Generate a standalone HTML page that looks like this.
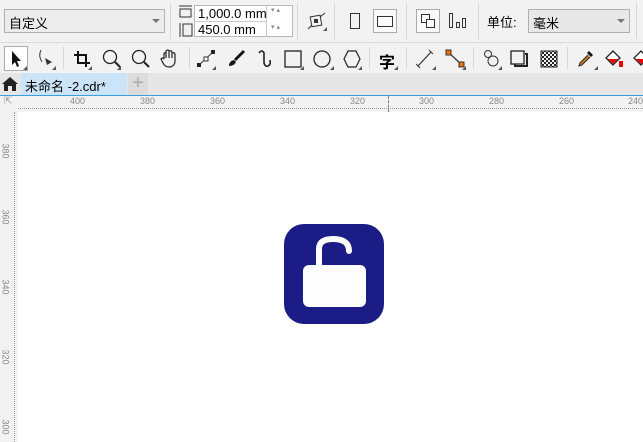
<!DOCTYPE html>
<html><head><meta charset="utf-8"><style>
*{margin:0;padding:0;box-sizing:border-box}
body{width:643px;height:442px;overflow:hidden;background:#f2f2f2;font-family:"Liberation Sans","Noto Sans CJK SC",sans-serif;position:relative;font-size:12px;color:#000}
.a{position:absolute}
.sep{position:absolute;width:1px;background:#d6d6d6}
.ic{position:absolute;width:24px;height:24px}
.tri{position:absolute;width:0;height:0;border-left:4px solid transparent;border-bottom:4px solid #555}
.rl{position:absolute;font-size:9px;color:#888}
</style></head><body>
<!-- row1 -->
<div class="a" style="left:4px;top:9px;width:161px;height:24px;border:1px solid #b0b0b0;background:#ececec;font-size:13px;padding:3px 4px">自定义</div>
<div class="a" style="left:152px;top:19px;border-left:4px solid transparent;border-right:4px solid transparent;border-top:4px solid #777"></div>
<div class="sep" style="left:170px;top:3px;height:36px"></div>
<svg class="a" style="left:178px;top:4px" width="16" height="34"><rect x="2" y="5" width="11" height="8" fill="none" stroke="#333"/><line x1="1" y1="2" x2="14" y2="2" stroke="#333"/><rect x="5" y="20" width="9" height="12" fill="none" stroke="#333"/><line x1="2" y1="19" x2="2" y2="33" stroke="#333"/></svg>
<div class="a" style="left:194px;top:5px;width:99px;height:32px;border:1px solid #b8b8b8;background:#fff"></div>
<div class="a" style="left:194px;top:21px;width:72px;height:1px;background:#ccc"></div>
<div class="a" style="left:266px;top:5px;width:1px;height:32px;background:#ccc"></div>
<div class="a" style="left:198px;top:6px;font-size:13px">1,000.0 mm</div>
<div class="a" style="left:198px;top:22px;font-size:13px">450.0 mm</div>
<div class="a" style="left:271px;top:6px;font-size:7px;color:#888">▾ ▴</div>
<div class="a" style="left:271px;top:23px;font-size:7px;color:#888">▾ ▴</div>
<div class="sep" style="left:297px;top:3px;height:36px"></div>
<svg class="a" style="left:306px;top:11px" width="22" height="22"><rect x="5" y="5" width="10" height="10" fill="none" stroke="#333" transform="rotate(-10 10 10)"/><rect x="8" y="8" width="4" height="4" fill="#333"/><line x1="14" y1="6" x2="19" y2="2" stroke="#333"/><line x1="2" y1="18" x2="6" y2="14" stroke="#333"/></svg>
<div class="tri" style="left:323px;top:27px"></div>
<div class="sep" style="left:334px;top:3px;height:36px"></div>
<div class="a" style="left:350px;top:13px;width:10px;height:16px;border:1px solid #333"></div>
<div class="a" style="left:373px;top:9px;width:24px;height:24px;border:1px solid #aaa;background:#fafafa"></div>
<div class="a" style="left:377px;top:16px;width:16px;height:11px;border:1px solid #333"></div>
<div class="sep" style="left:406px;top:3px;height:36px"></div>
<div class="a" style="left:416px;top:9px;width:24px;height:24px;border:1px solid #aaa;background:#fafafa"></div>
<div class="a" style="left:421px;top:14px;width:9px;height:9px;border:1px solid #333"></div>
<div class="a" style="left:426px;top:19px;width:9px;height:9px;border:1px solid #333;background:#fafafa"></div>
<div class="a" style="left:449px;top:13px;width:4px;height:15px;border:1px solid #333"></div>
<div class="a" style="left:456px;top:22px;width:4px;height:6px;border:1px solid #333"></div>
<div class="a" style="left:462px;top:18px;width:4px;height:10px;border:1px solid #333"></div>
<div class="sep" style="left:478px;top:3px;height:36px"></div>
<div class="a" style="left:487px;top:12px;font-size:13px">单位:</div>
<div class="a" style="left:528px;top:9px;width:102px;height:24px;border:1px solid #b0b0b0;background:#e8e8e8;font-size:13px;padding:3px 4px">毫米</div>
<div class="a" style="left:617px;top:19px;border-left:4px solid transparent;border-right:4px solid transparent;border-top:4px solid #777"></div>
<div class="sep" style="left:636px;top:3px;height:36px"></div>
<div class="a" style="left:0;top:42px;width:643px;height:1px;background:#dadada"></div>
<!-- row2 -->
<div class="a" style="left:4px;top:46px;width:24px;height:25px;border:1px solid #aaa;background:#fff"></div>
<svg class="a" style="left:9px;top:50px" width="14" height="18"><path d="M3 1 L3 15 L6 12 L8 17 L10 16 L8 11 L12 11 Z" fill="#111"/></svg>
<div class="tri" style="left:23px;top:66px"></div>
<svg class="a" style="left:36px;top:48px" width="22" height="22"><path d="M5 2 Q2 8 6 14" fill="none" stroke="#333"/><path d="M9 10 L16 14 L11 17 Z" fill="#333"/></svg>
<div class="tri" style="left:52px;top:66px"></div>
<div class="sep" style="left:63px;top:47px;height:22px"></div>
<svg class="a" style="left:72px;top:49px" width="22" height="22"><path d="M6 2 V14 H18 M2 6 H14 V18" fill="none" stroke="#111" stroke-width="2"/></svg>
<div class="tri" style="left:88px;top:66px"></div>
<svg class="a" style="left:101px;top:48px" width="22" height="22"><circle cx="9" cy="9" r="6.5" fill="none" stroke="#222" stroke-width="1.3"/><line x1="14" y1="14" x2="19" y2="19" stroke="#222" stroke-width="2"/></svg>
<div class="tri" style="left:117px;top:66px"></div>
<svg class="a" style="left:130px;top:48px" width="22" height="22"><circle cx="9" cy="9" r="6.5" fill="none" stroke="#222" stroke-width="1.3"/><line x1="14" y1="14" x2="19" y2="19" stroke="#222" stroke-width="2"/></svg>
<svg class="a" style="left:159px;top:48px" width="22" height="22"><path d="M5 11 V6 Q5 4 7 5 V10 V3 Q9 1 10 3 V10 V3 Q12 2 13 4 V10 V5 Q15 4 16 6 V14 Q15 19 10 19 Q6 19 4 15 L2 11 Q3 9 5 11" fill="none" stroke="#222" stroke-width="1.2"/></svg>
<div class="sep" style="left:189px;top:47px;height:22px"></div>
<svg class="a" style="left:196px;top:48px" width="22" height="22"><line x1="3" y1="17" x2="17" y2="4" stroke="#333"/><rect x="1" y="15" width="4" height="4" fill="#222"/><rect x="8" y="9" width="4" height="4" fill="#fff" stroke="#333"/><rect x="15" y="2" width="4" height="4" fill="#222"/></svg>
<div class="tri" style="left:212px;top:66px"></div>
<svg class="a" style="left:226px;top:48px" width="22" height="22"><path d="M17 2 L19 4 L10 13 L8 11 Z" fill="#111"/><path d="M8 12 Q3 13 3 18 Q8 18 10 14 Z" fill="#111"/></svg>
<svg class="a" style="left:255px;top:48px" width="22" height="22"><path d="M4 5 Q7 1 9 5 L9 15 Q10 19 13 18 Q16 17 15 12" fill="none" stroke="#222" stroke-width="1.6"/></svg>
<svg class="a" style="left:283px;top:48px" width="22" height="22"><rect x="2" y="3" width="16" height="16" fill="none" stroke="#222" stroke-width="1.3"/></svg>
<div class="tri" style="left:300px;top:66px"></div>
<svg class="a" style="left:311px;top:48px" width="22" height="22"><circle cx="11" cy="11" r="8" fill="none" stroke="#222" stroke-width="1.3"/></svg>
<div class="tri" style="left:330px;top:66px"></div>
<svg class="a" style="left:341px;top:48px" width="22" height="22"><path d="M7 3 H15 L19 11 L15 19 H7 L3 11 Z" fill="none" stroke="#222" stroke-width="1.2"/></svg>
<div class="tri" style="left:358px;top:66px"></div>
<div class="sep" style="left:369px;top:47px;height:22px"></div>
<div class="a" style="left:379px;top:49px;font-size:16px;font-weight:bold">字</div>
<div class="tri" style="left:394px;top:66px"></div>
<div class="sep" style="left:406px;top:47px;height:22px"></div>
<svg class="a" style="left:414px;top:48px" width="22" height="22"><line x1="4" y1="18" x2="17" y2="4" stroke="#333" stroke-width="1.2"/><line x1="2" y1="16" x2="6" y2="20" stroke="#333"/><line x1="15" y1="2" x2="19" y2="6" stroke="#333"/></svg>
<div class="tri" style="left:432px;top:66px"></div>
<svg class="a" style="left:445px;top:48px" width="22" height="22"><line x1="4" y1="5" x2="16" y2="16" stroke="#333" stroke-width="1.2"/><rect x="1" y="2" width="5" height="5" fill="#f07000" stroke="#333"/><rect x="14" y="14" width="5" height="5" fill="#f07000" stroke="#333"/></svg>
<div class="tri" style="left:462px;top:66px"></div>
<div class="sep" style="left:473px;top:47px;height:22px"></div>
<svg class="a" style="left:481px;top:48px" width="22" height="22"><circle cx="7" cy="6" r="3.5" fill="none" stroke="#333"/><circle cx="12" cy="13" r="5" fill="none" stroke="#333"/></svg>
<div class="tri" style="left:498px;top:66px"></div>
<svg class="a" style="left:509px;top:48px" width="22" height="22"><rect x="2" y="3" width="13" height="13" fill="none" stroke="#222" stroke-width="1.3"/><path d="M16 6 H18 V18 H6 V16" fill="none" stroke="#222" stroke-width="2"/></svg>
<svg class="a" style="left:540px;top:50px" width="18" height="18"><defs><pattern id="c" width="4" height="4" patternUnits="userSpaceOnUse"><rect width="2" height="2" fill="#222"/><rect x="2" y="2" width="2" height="2" fill="#222"/></pattern></defs><rect x="1" y="1" width="16" height="16" fill="url(#c)" stroke="#222"/></svg>
<div class="sep" style="left:567px;top:47px;height:22px"></div>
<svg class="a" style="left:575px;top:48px" width="22" height="22"><path d="M14 3 L18 7 L16 9 L12 5 Z" fill="#111"/><path d="M13 7 L5 15 L4 18 L7 17 L15 9" fill="#d97a20" stroke="#222"/></svg>
<div class="tri" style="left:594px;top:66px"></div>
<svg class="a" style="left:603px;top:48px" width="22" height="22"><path d="M3 10 L10 3 L17 10 L10 17 Z" fill="#fff" stroke="#222" stroke-width="1.3"/><path d="M5 11 L15 11 L10 16 Z" fill="#e00"/><rect x="16" y="13" width="4" height="6" fill="#e00"/></svg>
<svg class="a" style="left:631px;top:48px" width="14" height="22"><path d="M3 10 L10 3 L17 10 L10 17 Z" fill="#fff" stroke="#222" stroke-width="1.3"/><path d="M5 11 L15 11 L10 16 Z" fill="#e00"/></svg>
<!-- tabs -->
<div class="a" style="left:0;top:73px;width:643px;height:22px;background:#e6e6e6"></div>
<svg class="a" style="left:1px;top:76px" width="18" height="16"><path d="M1 8 L9 1 L17 8 H15 V15 H11 V10 H7 V15 H3 V8 Z" fill="#222"/></svg>
<div class="a" style="left:21px;top:73px;width:106px;height:22px;background:#cce4f7;font-size:13px;padding:3px 4px">未命名 -2.cdr*</div>
<div class="a" style="left:128px;top:73px;width:20px;height:22px;background:#dcdcdc;color:#aaa;font-size:20px;text-align:center;line-height:21px">+</div>
<div class="a" style="left:0;top:95px;width:643px;height:1px;background:#3a9fe0"></div>
<!-- ruler -->
<div class="a" style="left:0;top:96px;width:643px;height:16px;background:#f2f2f2"></div>
<div class="a" style="left:4px;top:96px;font-size:10px;color:#999">⇱</div>
<div class="a" style="left:18px;top:108px;width:625px;height:1px;border-top:1px dotted #999"></div>
<div class="rl" style="left:70px;top:96px">400</div><div class="rl" style="left:140px;top:96px">380</div>
<div class="rl" style="left:210px;top:96px">360</div><div class="rl" style="left:280px;top:96px">340</div>
<div class="rl" style="left:350px;top:96px">320</div><div class="rl" style="left:419px;top:96px">300</div>
<div class="rl" style="left:489px;top:96px">280</div><div class="rl" style="left:559px;top:96px">260</div>
<div class="rl" style="left:628px;top:96px">240</div>
<div class="a" style="left:388px;top:96px;width:1px;height:16px;border-left:1px dashed #777"></div>
<div class="a" style="left:0;top:112px;width:18px;height:330px;background:#f2f2f2"></div>
<div class="a" style="left:14px;top:112px;width:1px;height:330px;border-left:1px dotted #999"></div>
<div class="rl" style="left:-2px;top:146px;transform:rotate(90deg)">380</div>
<div class="rl" style="left:-2px;top:212px;transform:rotate(90deg)">360</div>
<div class="rl" style="left:-2px;top:282px;transform:rotate(90deg)">340</div>
<div class="rl" style="left:-2px;top:352px;transform:rotate(90deg)">320</div>
<div class="rl" style="left:-2px;top:422px;transform:rotate(90deg)">300</div>
<!-- canvas -->
<div class="a" style="left:18px;top:112px;width:625px;height:330px;background:#fff"></div>
<svg class="a" style="left:284px;top:224px" width="100" height="100">
<rect x="0" y="0" width="100" height="100" rx="20" fill="#1c1c87"/>
<path d="M35 42 V25 Q35 15 49 15 Q65 15 65 27" fill="none" stroke="#fdfdfd" stroke-width="6" stroke-linecap="round"/>
<rect x="19" y="41" width="63" height="42" rx="6" fill="#fdfdfd"/>
</svg>
</body></html>
